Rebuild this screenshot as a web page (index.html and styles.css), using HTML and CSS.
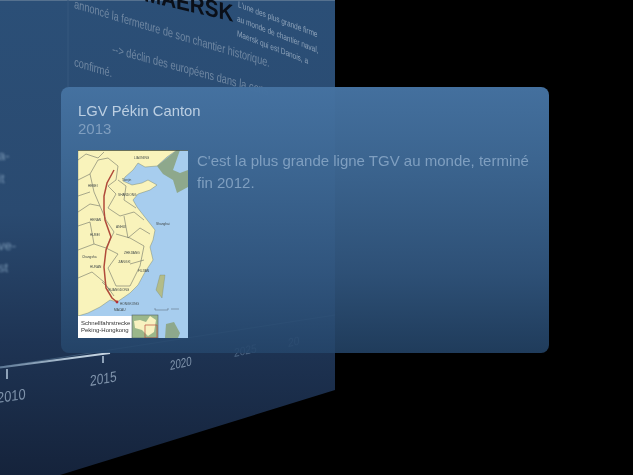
FILE: index.html
```html
<!DOCTYPE html>
<html lang="fr">
<head>
<meta charset="utf-8">
<title>LGV Pékin Canton</title>
<link rel="stylesheet" href="styles.css">
</head>
<body>
<main class="stage">
  <svg class="wall" width="633" height="475" viewBox="0 0 633 475" aria-hidden="true">
    <defs>
      <linearGradient id="wallFill" x1="0" y1="0" x2="0" y2="1">
        <stop offset="0" stop-color="#2b4f77"/>
        <stop offset="0.45" stop-color="#2a4a70"/>
        <stop offset="0.72" stop-color="#1e3454"/>
        <stop offset="1" stop-color="#15233b"/>
      </linearGradient>
      <linearGradient id="axisFill" gradientUnits="userSpaceOnUse" x1="0" y1="0" x2="110" y2="0">
        <stop offset="0" stop-color="#5d7895"/>
        <stop offset="0.65" stop-color="#b4c7d8"/>
        <stop offset="1" stop-color="#c9d7e3"/>
      </linearGradient>
    </defs>
    <polygon class="wall-face" points="0,0 335,0 335,390 60,475 0,475"/>
    <line class="wall-top" x1="0" y1="0.5" x2="335" y2="0.5"/>
    <line class="wall-rule" x1="68" y1="0" x2="68" y2="87"/>
    <g class="soft">
      <text class="logo" transform="matrix(.86 .2 0 1 144 1)">MAERSK</text>
      <text class="copy" transform="matrix(.73 .22 -.05 1 74 8)">annoncé la fermeture de son chantier historique.</text>
      <text class="copy" transform="matrix(.74 .2 -.05 1 112 53)">--&gt; déclin des européens dans la cons</text>
      <text class="copy" transform="matrix(.74 .22 -.05 1 74 66)">confirmé.</text>
      <text class="note" transform="matrix(.76 .29 -.03 1 238 7)">L'une des plus grande firme</text>
      <text class="note" transform="matrix(.76 .3 -.03 1 237 21)">au monde de chantier naval,</text>
      <text class="note" transform="matrix(.76 .3 -.03 1 237 36)">Maersk qui est Danois, a</text>
    </g>
    <g class="softer">
      <text class="side" x="-2" y="160">a-</text>
      <text class="side" x="-2" y="183">it</text>
      <text class="side" x="-2" y="250">ve-</text>
      <text class="side" x="-2" y="272">st</text>
    </g>
    <line class="axis-fade" x1="0" y1="367" x2="335" y2="315"/>
    <path class="axis" d="M0 367.4L110 353"/>
    <line class="tick" x1="7" y1="369" x2="7" y2="379"/>
    <line class="tick" x1="103" y1="356" x2="103" y2="363"/>
    <g class="soft">
      <text class="year" transform="matrix(.86 -.12 0 1 -3 403)">2010</text>
      <text class="year" transform="matrix(.8 -.14 0 1 90 386)">2015</text>
      <text class="year small" transform="matrix(.75 -.16 0 1 170 370)">2020</text>
      <text class="year faint" transform="matrix(.85 -.18 0 1 234 357)">2025</text>
      <text class="year faint" transform="matrix(.85 -.18 0 1 288 347)">20</text>
    </g>
  </svg>

  <article class="card">
    <header class="card-head">
      <h1 class="card-title">LGV Pékin Canton</h1>
      <p class="card-year">2013</p>
    </header>
    <div class="card-body">
      <svg class="map" width="110" height="188" viewBox="0 0 110 188" role="img" aria-label="Carte de la ligne Pékin-Hong Kong">
        <rect class="sea" width="110" height="188"/>
        <path class="foreign" d="M79 16L99 0H102L95 20L102 23L110 20V37L99 43L95 30L85 24Z"/>
        <path class="land" d="M0 0H99L89 7L79 16L67 17L60 13L55 20L47 27L45 31L54 35L64 33L70 30L79 35L72 40L60 44L55 50L59 57L66 66L77 80L75 90L72 97L75 110L67 122L60 135L52 143L39 152L32 150L22 157L10 163L0 166Z"/>
        <path class="isle" d="M82 125L87 125L84 148L78 140Z"/>
        <path class="foreign" d="M88 174L96 172L102 183L100 188H87Z"/>
        <path class="border" d="M0 10L8 4L20 8L26 2M0 30L12 24L20 10L30 8L40 16L38 30L30 36L38 44L30 58L42 66L56 62L66 70M0 62L12 54L22 56L28 70L36 82L28 98L40 104L30 118L38 136L52 136L62 116L66 96L52 88L38 84M0 100L16 94L28 98M0 128L14 122L26 132L36 146M40 30L48 36L46 50L58 58M46 66L50 88M12 24L16 42L22 56M16 94L12 72L0 76M50 88L62 78L72 84M52 114L66 110M24 132L32 140M0 46L12 42"/>
        <path class="rail" d="M36 20L29 33L26 46L26 60L27 70L33 87L28 100L26 117L28 138L34 148L39 152"/>
        <circle class="stop" cx="39" cy="152" r="1.4"/>
        <g class="map-labels">
          <text x="44" y="31">Tianjin</text>
          <text x="56" y="9">LIAONING</text>
          <text x="10" y="37">HEBEI</text>
          <text x="40" y="46">SHANDONG</text>
          <text x="12" y="71">HENAN</text>
          <text x="38" y="78">ANHUI</text>
          <text x="78" y="75">Shanghai</text>
          <text x="12" y="86">HUBEI</text>
          <text x="46" y="104">ZHEJIANG</text>
          <text x="4" y="108">Changsha</text>
          <text x="12" y="118">HUNAN</text>
          <text x="40" y="113">JIANGXI</text>
          <text x="60" y="122">FUJIAN</text>
          <text x="30" y="141">GUANGDONG</text>
          <text x="42" y="155">HONGKONG</text>
          <text x="36" y="161">MACAU</text>
        </g>
        <path class="scale" d="M77 158V160H90M90 160V158M93 159H101"/>
        <rect class="legend" x="0" y="166" width="54" height="22"/>
        <text class="legend-text" x="3" y="175">Schnellfahrstrecke</text>
        <text class="legend-text" x="3" y="182">Peking-Hongkong</text>
        <rect class="inset" x="54" y="165" width="26" height="23"/>
        <path class="inset-land" d="M56 171L62 170L68 172L72 166L78 170L76 182L70 186L64 180L57 178Z"/>
        <path class="inset-line" d="M67 175H79V188H67Z"/>
        <line class="map-edge" x1="0" y1="0.4" x2="110" y2="0.4"/>
      </svg>
      <p class="card-text">C'est la plus grande ligne TGV au monde, terminé fin 2012.</p>
    </div>
  </article>
</main>
</body>
</html>
```

FILE: styles.css
```css
* { box-sizing: border-box; }

html, body {
  margin: 0;
  height: 100%;
  background: #000;
  overflow: hidden;
}

.stage {
  position: relative;
  width: 633px;
  height: 475px;
  font-family: "Liberation Sans", Arial, sans-serif;
}

.wall {
  position: absolute;
  left: 0;
  top: 0;
}

.wall-face { fill: url(#wallFill); }
.wall-top { stroke: #55718f; stroke-width: 1; }
.wall-rule { stroke: #36587e; stroke-width: 1; }
.soft { filter: blur(0.6px); }
.softer { filter: blur(1px); }

.logo { font: 700 24px "Liberation Sans", sans-serif; fill: #0a0f18; }
.copy { font: 12.5px "Liberation Sans", sans-serif; fill: #6f87a2; }
.note { font: 8.5px "Liberation Sans", sans-serif; fill: #8ea3ba; }
.side { font: 13px "Liberation Sans", sans-serif; fill: #7896b3; }
.year { font: 15px "Liberation Sans", sans-serif; fill: #7f93ab; }
.year.small { font-size: 13px; }
.year.faint { font-size: 12px; fill: #4b6482; }

.axis-fade { stroke: #3b5775; stroke-width: 1; }
.axis { fill: none; stroke: url(#axisFill); stroke-width: 2; filter: blur(0.4px); }
.tick { stroke: #8ea2b8; stroke-width: 2; filter: blur(0.4px); }

.card {
  position: absolute;
  left: 61px;
  top: 87px;
  width: 488px;
  height: 266px;
  padding: 15px 17px;
  border-radius: 8px;
  background: linear-gradient(180deg, rgba(69, 114, 161, 0.98) 0%, rgba(61, 103, 147, 0.97) 30%, rgba(49, 86, 127, 0.93) 70%, rgba(37, 70, 107, 0.85) 100%);
}

.card-head { height: 48px; }

.card-title {
  margin: 0;
  font-size: 14.8px;
  line-height: 18px;
  font-weight: 400;
  color: #bccfe2;
  filter: blur(0.3px);
}

.card-year {
  margin: 0;
  font-size: 15px;
  line-height: 18px;
  color: #7f9ebf;
  filter: blur(0.3px);
}

.card-body {
  display: flex;
  align-items: flex-start;
  gap: 9px;
}

.map {
  flex: none;
  filter: blur(0.35px);
}

.sea { fill: #a7cdee; }
.land { fill: #f9f3bb; stroke: #6d7a5e; stroke-width: 0.4; }
.foreign { fill: #8ea88c; }
.isle { fill: #b3bc88; stroke: #6d7a5e; stroke-width: 0.3; }
.border { fill: none; stroke: #6f7468; stroke-width: 0.6; }
.rail { fill: none; stroke: #b04a3a; stroke-width: 1.5; }
.stop { fill: #b0303a; }
.scale { fill: none; stroke: #56626c; stroke-width: 0.5; }
.map-labels text { font: 3.2px "Liberation Sans", sans-serif; fill: #3f4747; }
.map-edge { stroke: #3c4438; stroke-width: 0.8; }
.legend { fill: #fff; }
.legend-text { font: 6px "Liberation Sans", sans-serif; fill: #333; }
.inset { fill: #9bb78a; stroke: #50606a; stroke-width: 0.6; }
.inset-land { fill: #f8f2c0; }
.inset-line { fill: none; stroke: #b94a3c; stroke-width: 0.7; }

.card-text {
  margin: 0;
  font-size: 15px;
  line-height: 22px;
  color: #7f9fc0;
  filter: blur(0.3px);
}
```
